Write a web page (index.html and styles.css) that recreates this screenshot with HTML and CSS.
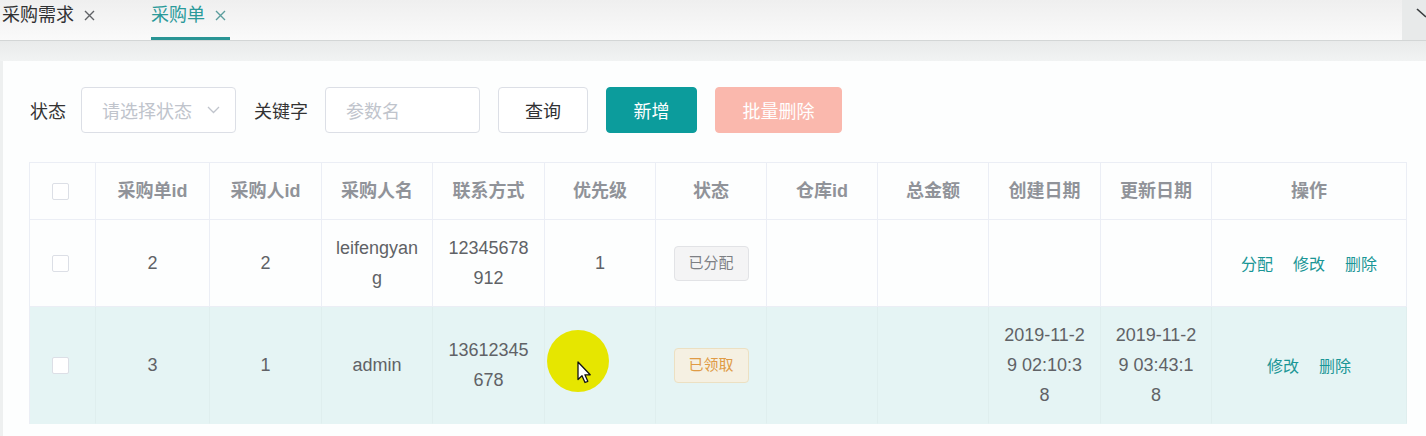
FILE: index.html
```html
<!DOCTYPE html>
<html lang="zh-CN">
<head>
<meta charset="utf-8">
<title>采购单</title>
<link rel="stylesheet" href="styles.css">
</head>
<body>
<nav class="tabbar">
  <div class="tab">
    <span>采购需求</span>
    <svg class="tab-close" width="11" height="11" viewBox="0 0 11 11"><path d="M1 1L10 10M10 1L1 10" stroke="currentColor" stroke-width="1.4" fill="none"/></svg>
  </div>
  <div class="tab active">
    <span>采购单</span>
    <svg class="tab-close" width="11" height="11" viewBox="0 0 11 11"><path d="M1 1L10 10M10 1L1 10" stroke="currentColor" stroke-width="1.4" fill="none"/></svg>
  </div>
  <div class="tabbar-end">
    <svg width="24" height="40" viewBox="0 0 24 40"><path d="M15 9L24 17" stroke="#3a3c3e" stroke-width="1.6" fill="none"/></svg>
  </div>
</nav>
<div class="band"></div>
<main class="card">
  <div class="filters">
    <label class="label">状态</label>
    <div class="select">
      <span>请选择状态</span>
      <svg width="13" height="8" viewBox="0 0 13 8"><path d="M1 1L6.5 6.5L12 1" stroke="#c0c4cc" stroke-width="1.3" fill="none"/></svg>
    </div>
    <label class="label label-kw">关键字</label>
    <div class="input">参数名</div>
    <button class="btn btn-plain">查询</button>
    <button class="btn btn-primary">新增</button>
    <button class="btn btn-danger-disabled">批量删除</button>
  </div>

  <div class="table">
    <div class="row head">
      <div class="cell c-check"><span class="checkbox"></span></div>
      <div class="cell">采购单id</div>
      <div class="cell">采购人id</div>
      <div class="cell">采购人名</div>
      <div class="cell">联系方式</div>
      <div class="cell">优先级</div>
      <div class="cell">状态</div>
      <div class="cell">仓库id</div>
      <div class="cell">总金额</div>
      <div class="cell">创建日期</div>
      <div class="cell">更新日期</div>
      <div class="cell">操作</div>
    </div>
    <div class="row">
      <div class="cell c-check"><span class="checkbox"></span></div>
      <div class="cell">2</div>
      <div class="cell">2</div>
      <div class="cell">leifengyang</div>
      <div class="cell">12345678912</div>
      <div class="cell">1</div>
      <div class="cell"><span class="tag tag-info">已分配</span></div>
      <div class="cell"></div>
      <div class="cell"></div>
      <div class="cell"></div>
      <div class="cell"></div>
      <div class="cell"><span class="ops"><a>分配</a><a>修改</a><a>删除</a></span></div>
    </div>
    <div class="row hover">
      <div class="cell c-check"><span class="checkbox"></span></div>
      <div class="cell">3</div>
      <div class="cell">1</div>
      <div class="cell">admin</div>
      <div class="cell">13612345678</div>
      <div class="cell"></div>
      <div class="cell"><span class="tag tag-warning">已领取</span></div>
      <div class="cell"></div>
      <div class="cell"></div>
      <div class="cell">2019-11-29 02:10:38</div>
      <div class="cell">2019-11-29 03:43:18</div>
      <div class="cell"><span class="ops"><a>修改</a><a>删除</a></span></div>
    </div>
  </div>
</main>

<div class="cursor-spot"></div>
<svg class="cursor-arrow" width="16" height="24" viewBox="0 0 16 24"><path d="M1 1L1 18.5L5 14.8L8 21.5L10.8 20.3L7.9 13.8L13.2 13.8Z" fill="#fff" stroke="#111" stroke-width="1.3" stroke-linejoin="round"/></svg>
</body>
</html>
```

FILE: styles.css
```css
* { box-sizing: border-box; }

html, body {
  margin: 0;
  padding: 0;
}

body {
  position: relative;
  width: 1426px;
  height: 436px;
  overflow: hidden;
  background: #eef0f0;
  font-family: "Liberation Sans", "Noto Sans CJK SC", sans-serif;
  font-size: 18px;
  color: #606266;
}

/* ---------- tab bar ---------- */
.tabbar {
  display: flex;
  height: 41px;
  background: linear-gradient(#efefef, #fafafa);
  border-bottom: 1px solid #d3d6d6;
  box-shadow: 0 1px 3px rgba(0, 0, 0, 0.06);
}

.tab {
  display: flex;
  align-items: flex-start;
  height: 40px;
  padding-left: 2px;
  line-height: 30px;
  color: #303133;
}

.tab-close {
  margin-left: 10px;
  margin-top: 10px;
  color: #606266;
}

.tab.active {
  margin-left: 56px;
  padding-left: 0;
  padding-right: 4px;
  color: #2a9a9a;
  border-bottom: 3px solid #2a9595;
}

.tab.active .tab-close {
  color: #5b9d9d;
}

.tabbar-end {
  margin-left: auto;
  width: 24px;
  height: 40px;
  background: #e8eaea;
}

.band {
  height: 20px;
  background: linear-gradient(#e9ebeb, #f1f3f3);
}

/* ---------- card ---------- */
.card {
  margin-left: 3px;
  height: 375px;
  background: #fdfefe;
  padding: 26px 20px 0 26px;
}

.filters {
  display: flex;
  align-items: center;
  height: 46px;
  padding-left: 1px;
}

.label {
  color: #333;
  margin-right: 15px;
}

.label-kw {
  margin-right: 17px;
}

.select {
  display: flex;
  align-items: center;
  justify-content: space-between;
  width: 155px;
  height: 46px;
  padding: 0 15px 0 20px;
  border: 1px solid #dcdfe6;
  border-radius: 4px;
  color: #c0c4cc;
  background: #fff;
  margin-right: 18px;
}

.input {
  display: flex;
  align-items: center;
  width: 155px;
  height: 46px;
  padding-left: 20px;
  border: 1px solid #dcdfe6;
  border-radius: 4px;
  color: #c0c4cc;
  background: #fff;
  margin-right: 18px;
}

.btn {
  height: 46px;
  border-radius: 4px;
  font: inherit;
  font-size: 18px;
  margin-right: 18px;
  padding: 0;
  border: 1px solid #dcdfe6;
}

.btn-plain {
  width: 90px;
  background: #fff;
  color: #303133;
}

.btn-primary {
  width: 91px;
  background: #0c9c9c;
  border-color: #0c9c9c;
  color: #fff;
}

.btn-danger-disabled {
  width: 127px;
  background: #fab8ad;
  border-color: #fab8ad;
  color: #fff;
}

/* ---------- table ---------- */
.table {
  margin-top: 29px;
  width: 1378px;
  border-top: 1px solid #ebeef5;
  border-left: 1px solid #ebeef5;
}

.row {
  display: grid;
  grid-template-columns: 66px 114px 112px 111px 112px 111px 111px 111px 111px 112px 111px 195px;
}

.cell {
  display: flex;
  align-items: center;
  justify-content: center;
  padding: 13px 13.5px;
  line-height: 30px;
  text-align: center;
  word-break: break-all;
  border-right: 1px solid #ebeef5;
  border-bottom: 1px solid #ebeef5;
  min-height: 57px;
}

.head .cell {
  color: #909399;
  font-weight: bold;
}

.c-check {
  padding-right: 17px;
}

.checkbox {
  display: block;
  width: 17px;
  height: 17px;
  border: 1px solid #dcdfe6;
  border-radius: 2px;
  background: #fff;
}

.row.hover {
  background: #e5f4f4;
}

.row.hover .cell {
  border-right-color: #dfeeee;
  border-bottom-color: #e5f4f4;
}

.tag {
  display: inline-flex;
  align-items: center;
  justify-content: center;
  width: 75px;
  height: 35px;
  font-size: 15px;
  border-radius: 4px;
  border: 1px solid;
}

.tag-info {
  background: #f4f4f5;
  border-color: #e2e3e6;
  color: #7d7f84;
}

.tag-warning {
  background: #f5f0e2;
  border-color: #ece0c2;
  color: #e09b45;
}

.ops {
  display: inline-flex;
  gap: 20px;
  font-size: 16px;
  color: #1a9696;
  padding-top: 3px;
}

/* ---------- recording cursor overlay ---------- */
.cursor-spot {
  position: absolute;
  left: 547px;
  top: 330px;
  width: 62px;
  height: 62px;
  border-radius: 50%;
  background: #e6e600;
}

.cursor-arrow {
  position: absolute;
  left: 577px;
  top: 361px;
}
```
